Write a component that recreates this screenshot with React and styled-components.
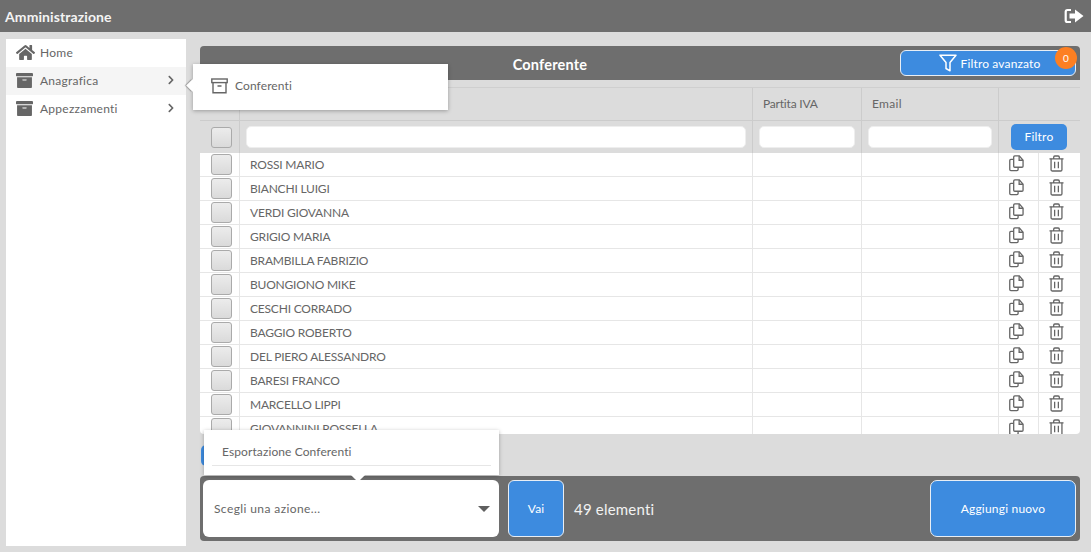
import React from "react";
import styled, { createGlobalStyle } from "styled-components";
import { FaHome, FaArchive, FaChevronRight } from "react-icons/fa";

const Global = createGlobalStyle`
  html, body { margin: 0; padding: 0; height: 100%; overflow: hidden; }
  body { background: #dcdcdc; font-family: "Lato", "Noto Sans", sans-serif; color: #5f5f5f; }
  * { box-sizing: border-box; }
`;

const Page = styled.div`
  width: 1091px; height: 552px; display: flex; flex-direction: column; position: relative;
`;
const Header = styled.header`
  height: 32px; flex: none; background: #6e6e6e; display: flex; align-items: center;
  justify-content: space-between; padding: 0 7px 0 5px; color: #fff;
`;
const Brand = styled.div`
  font-size: 14px; font-weight: 700; color: #f4f4f4; letter-spacing: 0.1px;
`;
const Body = styled.div`
  flex: 1; display: flex; padding: 7px 11px 6px 6px; gap: 14px; min-height: 0;
`;
const Sidebar = styled.nav`
  width: 180px; flex: none; background: #fff;
`;
const NavItem = styled.div`
  height: 28px; display: flex; align-items: center; padding: 0 10px 2px 10px; gap: 7px;
  font-size: 12px; color: #666; background: ${(p) => (p.$active ? "#f5f5f5" : "#fff")};
  position: relative; letter-spacing: 0.25px;
`;
const NavIcon = styled.span`
  width: 17px; flex: none; display: flex; align-items: center;
  svg { flex: none; }
`;
const NavLabel = styled.span`
  flex: 1;
`;
const Main = styled.main`
  flex: 1; display: flex; flex-direction: column; padding-top: 7px; min-width: 0;
`;
const TitleBar = styled.div`
  height: 34px; flex: none; background: #6e6e6e; border-radius: 4px 4px 0 0; display: flex; align-items: center;
  justify-content: center; position: relative; color: #fff; font-size: 14.5px; font-weight: 700;
  padding: 2px 180px 0 0; letter-spacing: 0.2px;
`;
const AdvancedFilter = styled.button`
  position: absolute; right: 4px; top: 4px; width: 176px; height: 26px; background: #3d8bdf;
  border: 1px solid #e8eef5; border-radius: 6px; color: #fff; font: inherit; font-weight: 400; font-size: 12px;
  letter-spacing: 0.15px; display: flex; align-items: center; justify-content: center; gap: 4px; padding: 0 0 0 3px;
`;
const Badge = styled.span`
  position: absolute; right: -2px; top: -4px; width: 22px; height: 22px; border-radius: 50%;
  background: #fd7f22; color: #fff; font-size: 10px; display: flex; align-items: center; justify-content: center;
`;
const TableHead = styled.div`
  margin-top: 7px; flex: none; border-top: 1px solid #cfcfcf;
`;
const Grid = styled.div`
  display: grid; grid-template-columns: 40px 513px 109px 137px 40px 41px;
`;
const HeadRow = styled(Grid)`
  height: 33px; border-bottom: 1px solid #cccccc;
`;
const FilterRow = styled(Grid)`
  height: 32px;
`;
const HeadCell = styled.div`
  grid-column: ${(p) => p.$span || "auto"}; border-right: ${(p) => (p.$last ? "none" : "1px solid #cccccc")};
  display: flex; align-items: center; padding: 0 0 1px 10px; font-size: 12px; color: #666; letter-spacing: ${(p) => p.$ls || "0"};
`;
const FilterCell = styled.div`
  grid-column: ${(p) => p.$span || "auto"}; border-right: ${(p) => (p.$last ? "none" : "1px solid #cccccc")};
  display: flex; align-items: center; justify-content: ${(p) => (p.$center ? "center" : "flex-start")}; padding: ${(p) => p.$pad || "0"};
`;
const FilterInput = styled.div`
  width: 100%; height: 22px; background: #fff; border-radius: 5px; border: 1px solid #eee;
`;
const Check = styled.div`
  width: 21px; height: 21px; margin-left: 4px; border-radius: 3px; border: 1px solid #aaa;
  background: linear-gradient(#ececec, #dadada);
`;
const FilterButton = styled.button`
  width: 56px; height: 26px; margin-left: 12px; margin-top: -1px; background: #3d8bdf; color: #fff; border: none; border-radius: 5px;
  font: inherit; font-size: 12px; letter-spacing: 0.2px; padding: 0;
`;
const Rows = styled.div`
  flex: none; height: 281px; overflow: hidden; background: #fff; border-radius: 0 0 4px 4px;
`;
const Row = styled(Grid)`
  height: 24px; border-bottom: 1px solid #e6e6e6;
`;
const Cell = styled.div`
  border-right: 1px solid #e6e6e6; display: flex; align-items: center;
  justify-content: ${(p) => (p.$center ? "center" : "flex-start")}; padding-left: ${(p) => p.$pl || 0}px; font-size: 12px; color: #666; letter-spacing: -0.2px;
  white-space: nowrap; height: 23px;
`;
const IconCell = styled.div`
  border-right: ${(p) => (p.$last ? "none" : "1px solid #e6e6e6")}; height: 23px; display: flex; align-items: flex-start;
  padding: 2px 0 0 ${(p) => p.$pl}px;
`;
const Spacer = styled.div`
  flex: none; height: 42px; padding-top: 11px;
`;
const HiddenButton = styled.div`
  width: 30px; height: 21px; background: #3d8bdf; border-radius: 5px; margin-left: 1px;
`;
const ActionBar = styled.div`
  flex: none; height: 65px; background: #6e6e6e; border-radius: 4px; display: flex; align-items: center;
  padding: 0 4px 0 3px; position: relative;
`;
const Select = styled.div`
  width: 296px; height: 57px; background: #fff; border-radius: 6px; display: flex; align-items: center;
  justify-content: space-between; padding: 0 9px 0 11px; font-size: 12px; letter-spacing: 0.4px; color: #666;
`;
const Caret = styled.span`
  width: 0; height: 0; border-left: 6px solid transparent; border-right: 6px solid transparent; border-top: 6px solid #5f5f5f;
`;
const GoButton = styled.button`
  width: 56px; height: 57px; margin-left: 9px; background: #3d8bdf; border: 1px solid #e8eef5; border-radius: 6px;
  color: #fff; font: inherit; font-size: 12px; letter-spacing: 0.1px; padding: 0;
`;
const Count = styled.span`
  color: #f2f2f2; font-size: 15px; margin-left: 10px; flex: 1; letter-spacing: 0.2px;
`;
const AddButton = styled.button`
  width: 146px; height: 57px; background: #3d8bdf; border: 1px solid #e8eef5; border-radius: 7px;
  color: #fff; font: inherit; font-size: 12px; letter-spacing: 0.2px; padding: 0;
`;
const Flyout = styled.div`
  position: absolute; left: 193px; top: 64px; width: 255px; height: 46px; background: #fff;
  box-shadow: 0 1px 4px rgba(0,0,0,.3); display: flex; align-items: center; padding: 0 0 3px 18px; gap: 7px;
  font-size: 12px; letter-spacing: 0.1px; color: #666;
  &::before {
    content: ""; position: absolute; left: -5px; top: 17px; width: 9px; height: 9px; background: #fff;
    transform: rotate(45deg); box-shadow: -1px 1px 1px rgba(0,0,0,.3);
  }
`;
const FlyoutLabel = styled.span`
  position: relative;
`;
const ActionMenu = styled.div`
  position: absolute; left: 204px; top: 430px; width: 295px; height: 45px; background: #fff;
  box-shadow: 0 1px 4px rgba(0,0,0,.28); padding: 0 8px;
  font-size: 12px; letter-spacing: 0.1px; color: #666;
  &::after {
    content: ""; position: absolute; left: 149px; bottom: -5px; width: 10px; height: 10px; background: #fff;
    transform: rotate(45deg);
  }
`;
const MenuItem = styled.div`
  height: 36px; border-bottom: 1px solid #e6e6e6; display: flex; align-items: center; padding: 7px 0 0 10px;
`;

const names = ["ROSSI MARIO","BIANCHI LUIGI","VERDI GIOVANNA","GRIGIO MARIA","BRAMBILLA FABRIZIO","BUONGIONO MIKE","CESCHI CORRADO","BAGGIO ROBERTO","DEL PIERO ALESSANDRO","BARESI FRANCO","MARCELLO LIPPI","GIOVANNINI ROSSELLA"];

const SignOut = () => (
  <svg width="20" height="16" viewBox="0 0 20 16" fill="none">
    <path d="M7 2H3.5A1.8 1.8 0 0 0 1.7 3.8v8.4A1.8 1.8 0 0 0 3.5 14H7" stroke="#fff" strokeWidth="2.2" />
    <path d="M5.5 5.5H11V1.5L19.5 8 11 14.5V10.5H5.5z" fill="#fff" />
  </svg>
);
const Funnel = () => (
  <svg width="18" height="18" viewBox="0 0 18 18" fill="none">
    <path d="M1 1.2h16L11 8.4v8.4L7 14.5V8.4z" stroke="#fff" strokeWidth="1.5" strokeLinejoin="round" />
  </svg>
);
const BoxOutline = () => (
  <svg width="17" height="16" viewBox="0 0 17 16" fill="none" stroke="#666" strokeWidth="1.4">
    <rect x="0.8" y="1" width="15.4" height="3.6" />
    <path d="M2 4.6V14.8H15V4.6M6.5 8h4" />
  </svg>
);
const CopyIcon = () => (
  <svg width="15" height="17" viewBox="0 0 16 18" fill="none" stroke="#666" strokeWidth="1.4">
    <path d="M5 4.5H2a1.2 1.2 0 0 0-1.2 1.2v9.6A1.2 1.2 0 0 0 2 16.5h6.5a1.2 1.2 0 0 0 1.2-1.2V13" />
    <path d="M9 .8H6.2A1.2 1.2 0 0 0 5 2v9.8A1.2 1.2 0 0 0 6.2 13h7.6a1.2 1.2 0 0 0 1.2-1.2V5.5L11 .8z" />
    <path d="M10.8 1v4.5H15" />
  </svg>
);
const TrashIcon = () => (
  <svg width="15" height="17" viewBox="0 0 16 18" fill="none" stroke="#666" strokeWidth="1.4">
    <path d="M.5 4h15M5 4V2.2A1.2 1.2 0 0 1 6.2 1h3.6A1.2 1.2 0 0 1 11 2.2V4" />
    <path d="M2.2 4v11.6a1.4 1.4 0 0 0 1.4 1.4h8.8a1.4 1.4 0 0 0 1.4-1.4V4" />
    <path d="M6 7v7M10 7v7" />
  </svg>
);

export default function App() {
  return (
    <Page>
      <Global />
      <Header>
        <Brand>Amministrazione</Brand>
        <SignOut />
      </Header>
      <Body>
        <Sidebar>
          <NavItem><NavIcon><FaHome size={19} /></NavIcon><NavLabel>Home</NavLabel></NavItem>
          <NavItem $active><NavIcon><FaArchive size={17} /></NavIcon><NavLabel>Anagrafica</NavLabel><FaChevronRight size={10} /></NavItem>
          <NavItem><NavIcon><FaArchive size={17} /></NavIcon><NavLabel>Appezzamenti</NavLabel><FaChevronRight size={10} /></NavItem>
        </Sidebar>
        <Main>
          <TitleBar>
            Conferente
            <AdvancedFilter><Funnel />Filtro avanzato<Badge>0</Badge></AdvancedFilter>
          </TitleBar>
          <TableHead>
            <HeadRow>
              <HeadCell />
              <HeadCell />
              <HeadCell $ls="-0.2px">Partita IVA</HeadCell>
              <HeadCell $ls="0.3px">Email</HeadCell>
              <HeadCell $span="span 2" $last />
            </HeadRow>
            <FilterRow>
              <FilterCell $center><Check /></FilterCell>
              <FilterCell $pad="0 6px"><FilterInput /></FilterCell>
              <FilterCell $pad="0 6px"><FilterInput /></FilterCell>
              <FilterCell $pad="0 6px"><FilterInput /></FilterCell>
              <FilterCell $span="span 2" $last><FilterButton>Filtro</FilterButton></FilterCell>
            </FilterRow>
          </TableHead>
          <Rows>
            {names.map((n) => (
              <Row key={n}>
                <Cell $center><Check /></Cell>
                <Cell $pl={10}>{n}</Cell>
                <Cell />
                <Cell />
                <IconCell $pl={10}><CopyIcon /></IconCell>
                <IconCell $pl={10} $last><TrashIcon /></IconCell>
              </Row>
            ))}
          </Rows>
          <Spacer><HiddenButton /></Spacer>
          <ActionBar>
            <Select>Scegli una azione...<Caret /></Select>
            <GoButton>Vai</GoButton>
            <Count>49 elementi</Count>
            <AddButton>Aggiungi nuovo</AddButton>
          </ActionBar>
        </Main>
      </Body>
      <Flyout><BoxOutline /><FlyoutLabel>Conferenti</FlyoutLabel></Flyout>
      <ActionMenu><MenuItem>Esportazione Conferenti</MenuItem></ActionMenu>
    </Page>
  );
}
